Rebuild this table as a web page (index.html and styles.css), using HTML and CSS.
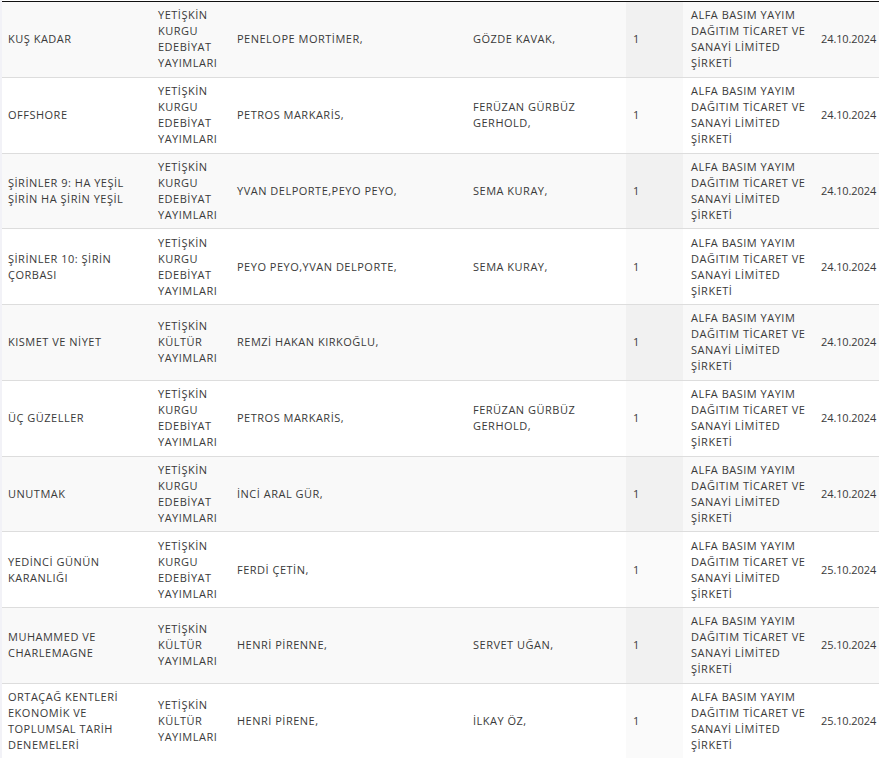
FILE: index.html
```html
<!DOCTYPE html>
<html lang="tr">
<head>
<meta charset="utf-8">
<title>Liste</title>
<link rel="stylesheet" href="styles.css">
</head>
<body>
<div class="wrap">
<table class="list">
<colgroup>
<col class="c1"><col class="c2"><col class="c3"><col class="c4"><col class="c5"><col class="c6"><col class="c7">
</colgroup>
<tbody>
<tr><td class="title">KUŞ KADAR</td><td>YETİŞKİN KURGU EDEBİYAT YAYIMLARI</td><td>PENELOPE MORTİMER,</td><td>GÖZDE KAVAK,</td><td class="sorted">1</td><td>ALFA BASIM YAYIM DAĞITIM TİCARET VE SANAYİ LİMİTED ŞİRKETİ</td><td class="date">24.10.2024</td></tr>
<tr><td class="title">OFFSHORE</td><td>YETİŞKİN KURGU EDEBİYAT YAYIMLARI</td><td>PETROS MARKARİS,</td><td>FERÜZAN GÜRBÜZ GERHOLD,</td><td class="sorted">1</td><td>ALFA BASIM YAYIM DAĞITIM TİCARET VE SANAYİ LİMİTED ŞİRKETİ</td><td class="date">24.10.2024</td></tr>
<tr><td class="title">ŞİRİNLER 9: HA YEŞİL ŞİRİN HA ŞİRİN YEŞİL</td><td>YETİŞKİN KURGU EDEBİYAT YAYIMLARI</td><td>YVAN DELPORTE,PEYO PEYO,</td><td>SEMA KURAY,</td><td class="sorted">1</td><td>ALFA BASIM YAYIM DAĞITIM TİCARET VE SANAYİ LİMİTED ŞİRKETİ</td><td class="date">24.10.2024</td></tr>
<tr><td class="title">ŞİRİNLER 10: ŞİRİN ÇORBASI</td><td>YETİŞKİN KURGU EDEBİYAT YAYIMLARI</td><td>PEYO PEYO,YVAN DELPORTE,</td><td>SEMA KURAY,</td><td class="sorted">1</td><td>ALFA BASIM YAYIM DAĞITIM TİCARET VE SANAYİ LİMİTED ŞİRKETİ</td><td class="date">24.10.2024</td></tr>
<tr><td class="title">KISMET VE NİYET</td><td>YETİŞKİN KÜLTÜR YAYIMLARI</td><td>REMZİ HAKAN KIRKOĞLU,</td><td></td><td class="sorted">1</td><td>ALFA BASIM YAYIM DAĞITIM TİCARET VE SANAYİ LİMİTED ŞİRKETİ</td><td class="date">24.10.2024</td></tr>
<tr><td class="title">ÜÇ GÜZELLER</td><td>YETİŞKİN KURGU EDEBİYAT YAYIMLARI</td><td>PETROS MARKARİS,</td><td>FERÜZAN GÜRBÜZ GERHOLD,</td><td class="sorted">1</td><td>ALFA BASIM YAYIM DAĞITIM TİCARET VE SANAYİ LİMİTED ŞİRKETİ</td><td class="date">24.10.2024</td></tr>
<tr><td class="title">UNUTMAK</td><td>YETİŞKİN KURGU EDEBİYAT YAYIMLARI</td><td>İNCİ ARAL GÜR,</td><td></td><td class="sorted">1</td><td>ALFA BASIM YAYIM DAĞITIM TİCARET VE SANAYİ LİMİTED ŞİRKETİ</td><td class="date">24.10.2024</td></tr>
<tr><td class="title">YEDİNCİ GÜNÜN KARANLIĞI</td><td>YETİŞKİN KURGU EDEBİYAT YAYIMLARI</td><td>FERDİ ÇETİN,</td><td></td><td class="sorted">1</td><td>ALFA BASIM YAYIM DAĞITIM TİCARET VE SANAYİ LİMİTED ŞİRKETİ</td><td class="date">25.10.2024</td></tr>
<tr><td class="title">MUHAMMED VE CHARLEMAGNE</td><td>YETİŞKİN KÜLTÜR YAYIMLARI</td><td>HENRİ PİRENNE,</td><td>SERVET UĞAN,</td><td class="sorted">1</td><td>ALFA BASIM YAYIM DAĞITIM TİCARET VE SANAYİ LİMİTED ŞİRKETİ</td><td class="date">25.10.2024</td></tr>
<tr><td class="title">ORTAÇAĞ KENTLERİ EKONOMİK VE TOPLUMSAL TARİH DENEMELERİ</td><td>YETİŞKİN KÜLTÜR YAYIMLARI</td><td>HENRİ PİRENE,</td><td>İLKAY ÖZ,</td><td class="sorted">1</td><td>ALFA BASIM YAYIM DAĞITIM TİCARET VE SANAYİ LİMİTED ŞİRKETİ</td><td class="date">25.10.2024</td></tr>
</tbody>
</table>
</div>
</body>
</html>
```
FILE: styles.css
```css
html, body {
  margin: 0;
  padding: 0;
  background: #fff;
}
.wrap {
  padding-top: 1px;
  border-left: 2px solid #f2f2f7;
  overflow: hidden;
}
.list {
  table-layout: fixed;
  width: 877px;
  border-collapse: collapse;
  border-top: 1px solid #111;
  font-family: "Open Sans", "DejaVu Sans", sans-serif;
  font-size: 11px;
  line-height: 16px;
  letter-spacing: 0.5px;
  color: #3a3a3a;
}
.c1 { width: 148px; }
.c2 { width: 79px; }
.c3 { width: 236px; }
.c4 { width: 161px; }
.c5 { width: 57px; }
.c6 { width: 130px; }
.c7 { width: 66px; }
.list td {
  padding: 5.375px 3px 5.375px 8px;
  vertical-align: middle;
  border-bottom: 1px solid #ddd;
  height: 64px;
}
.list td.title { padding-left: 6px; }
.list td.sorted { padding-left: 7px; }
.list td.date { letter-spacing: -0.1px; }
.list tr:nth-child(odd) td { background: #f9f9f9; }
.list tr:nth-child(odd) td.sorted { background: #f1f1f1; }
.list tr:nth-child(even) td.sorted { background: #fafafa; }
```
